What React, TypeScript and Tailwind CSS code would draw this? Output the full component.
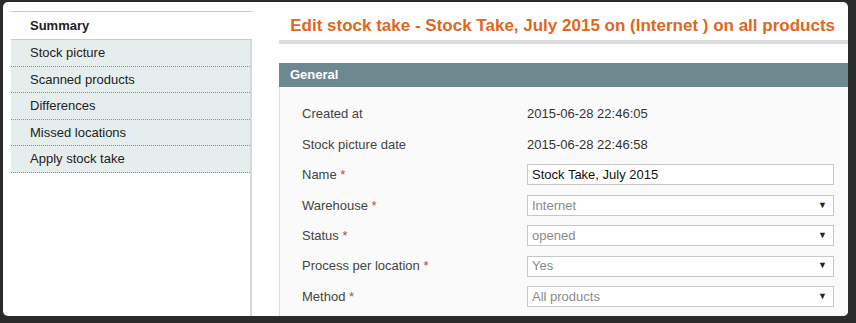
import { ReactNode } from 'react';

const tabs = ['Stock picture', 'Scanned products', 'Differences', 'Missed locations', 'Apply stock take'];

function Req() {
  return <span className="text-[#b94a48]"> *</span>;
}

function Select({ value }: { value: string }) {
  return (
    <div className="flex h-[21px] w-[307px] items-center justify-between border border-[#c8c8c8] bg-white pl-[4px] pr-[6px] text-[13px] text-[#8a8a8a]">
      <span>{value}</span>
      <span className="text-[9px] text-[#222]">▼</span>
    </div>
  );
}

function Row({ label, children }: { label: ReactNode; children: ReactNode }) {
  return (
    <div className="flex h-[30.4px] items-center">
      <div className="w-[225px] shrink-0 text-[13px] text-[#444]">{label}</div>
      <div className="text-[13px] text-[#333]">{children}</div>
    </div>
  );
}

export default function App() {
  return (
    <div className="h-[323px] w-[856px] overflow-hidden bg-[#2b2b2b] pl-[3px] pt-[2px] font-['Liberation_Sans',Arial,sans-serif]">
      <div className="flex h-[314px] w-[845px] overflow-hidden rounded-[5px] bg-white">
        {/* left tabs */}
        <div className="ml-[8px] flex w-[241px] shrink-0 flex-col pt-[9px]">
          <div className="flex h-[29px] items-center border-y border-[#c8cccc] pl-[19px] text-[13px] font-bold text-[#222]">
            Summary
          </div>
          <div className="flex-1 border-r-2 border-[#d4d8d8]">
            <div className="bg-[#e6eded]">
              {tabs.map((t) => (
                <div
                  key={t}
                  className="flex h-[26.6px] items-center border-b border-dotted border-[#8a9090] pl-[19px] text-[13px] text-[#222]"
                >
                  {t}
                </div>
              ))}
            </div>
          </div>
        </div>

        {/* main */}
        <div className="ml-[27px] flex flex-1 flex-col">
          <div className="flex h-[38px] items-end justify-end pb-[2px] pr-[13px] text-[17px] font-bold text-[#e0671c]">
            Edit stock take - Stock Take, July 2015 on (Internet ) on all products
          </div>
          <div className="h-[4px] bg-[#dcdcdc]" />
          <div className="mt-[19px] flex h-[24px] items-center bg-[#6e8890] pl-[11px] text-[13px] font-bold text-white">
            General
          </div>
          <div className="flex-1 border-l border-[#dedede] bg-[#fafafa] pl-[22px] pt-[12px]">
            <Row label="Created at">2015-06-28 22:46:05</Row>
            <Row label="Stock picture date">2015-06-28 22:46:58</Row>
            <Row label={<>Name<Req /></>}>
              <div className="flex h-[21px] w-[307px] items-center border border-[#c8c8c8] bg-white pl-[4px] text-[13px] text-[#111]">
                Stock Take, July 2015
              </div>
            </Row>
            <Row label={<>Warehouse<Req /></>}>
              <Select value="Internet" />
            </Row>
            <Row label={<>Status<Req /></>}>
              <Select value="opened" />
            </Row>
            <Row label={<>Process per location<Req /></>}>
              <Select value="Yes" />
            </Row>
            <Row label={<>Method<Req /></>}>
              <Select value="All products" />
            </Row>
          </div>
        </div>
      </div>
    </div>
  );
}
